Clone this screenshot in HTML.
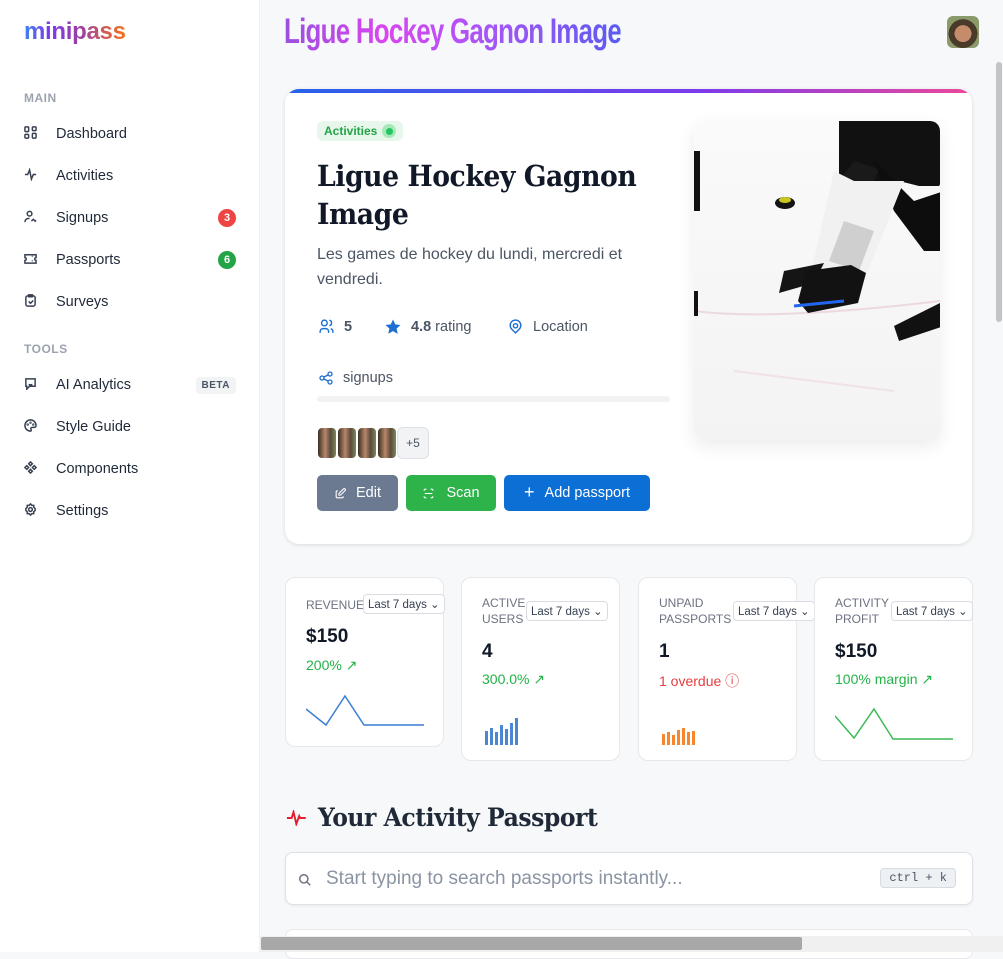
<!DOCTYPE html>
<html><head><meta charset="utf-8"><style>
*{box-sizing:border-box;margin:0;padding:0}
body{width:1003px;height:952px;overflow:hidden;background:#f6f8fa;font-family:"Liberation Sans",sans-serif;color:#1f2937;position:relative}
.sb{position:absolute;left:0;top:0;width:260px;height:952px;background:#fff;border-right:1px solid #eef0f3}
.logo{position:absolute;left:24px;top:18px;font-size:24px;font-weight:bold;letter-spacing:-0.3px;background:linear-gradient(90deg,#3b82f6 0%,#7c3aed 25%,#9b3fa5 55%,#f97316 100%);-webkit-background-clip:text;color:transparent}
.sec{position:absolute;left:24px;font-size:12px;font-weight:bold;color:#9ca3af;letter-spacing:.5px}
.it{position:absolute;left:24px;width:212px;height:24px;display:flex;align-items:center;font-size:14.5px;color:#1f2937}
.it svg{width:13px;height:13px;margin-right:19px;margin-top:-4px;stroke:#374151;fill:none;stroke-width:1.6}
.bd{margin-left:auto;width:18px;height:18px;border-radius:9px;color:#fff;font-size:11px;font-weight:bold;display:flex;align-items:center;justify-content:center}
.beta{margin-left:auto;background:#f1f3f5;color:#4b5563;font-size:10px;font-weight:bold;padding:3px 6px;border-radius:4px;letter-spacing:.5px}
.title{position:absolute;left:284px;top:12px;font-size:35px;font-weight:bold;letter-spacing:-1px;transform:scaleX(.74);transform-origin:left top;background:linear-gradient(90deg,#9b4fe0,#d946ef 30%,#a855f7 60%,#5b5bf0);-webkit-background-clip:text;color:transparent;white-space:nowrap}
.av{position:absolute;left:947px;top:16px;width:32px;height:32px;border-radius:6px;background:radial-gradient(circle at 50% 55%,#c58b6a 0 35%,#4a3a2a 36% 60%,#8a9a6a 61%)}
.hero{position:absolute;left:285px;top:89px;width:687px;height:455px;background:#fff;border-radius:14px;box-shadow:0 1px 4px rgba(0,0,0,.12);overflow:hidden}
.hero:before{content:"";position:absolute;left:0;top:0;right:0;height:4px;background:linear-gradient(90deg,#2563eb,#7c3aed 60%,#ec4899)}
.chip{position:absolute;left:32px;top:32px;height:20px;background:#e8f7ec;border-radius:6px;color:#22a447;font-size:12px;font-weight:bold;padding:3px 7px;display:flex;align-items:center}
.chip i{display:inline-block;width:14px;height:14px;border-radius:7px;background:#a7e8b8;margin-left:5px;position:relative}
.chip i:after{content:"";position:absolute;left:3.5px;top:3.5px;width:7px;height:7px;border-radius:4px;background:#22c55e}
.h1{position:absolute;left:32px;top:68px;font-family:"DejaVu Serif","Liberation Serif",serif;font-size:29px;font-weight:bold;line-height:38px;color:#111827;letter-spacing:-.5px;transform:scaleX(.92);transform-origin:left top;white-space:nowrap}
.desc{position:absolute;left:32px;top:153px;font-size:16px;line-height:25px;color:#4b5563;width:340px}
.meta{position:absolute;top:229px;font-size:14.5px;color:#4b5563;display:flex;align-items:center}
.meta svg{margin-right:9px}
.bar{position:absolute;left:32px;top:307px;width:353px;height:6px;background:#f1f2f4;border-radius:3px}
.avs{position:absolute;left:32px;top:338px;display:flex}
.avs span{width:20px;height:32px;border-radius:5px;background:linear-gradient(90deg,#3a3024,#b8866a 40%,#5a4a3a 70%,#7a8a5a);border:1px solid #fff}
.avs b{width:32px;height:32px;border-radius:6px;background:#f1f3f5;border:1px solid #dde1e6;font-size:12px;font-weight:normal;color:#4b5563;display:flex;align-items:center;justify-content:center}
.btn{position:absolute;top:386px;height:36px;border-radius:5px;color:#fff;font-size:14.5px;display:flex;align-items:center;justify-content:center}
.img{position:absolute;left:409px;top:32px;width:246px;height:319px;border-radius:10px;overflow:hidden;box-shadow:0 6px 18px rgba(0,0,0,.08);background:linear-gradient(#fafafa,#f3f3f4)}
.st{position:absolute;top:577px;background:#fff;border-radius:10px;border:1px solid #e5e7eb;width:159px}
.lb{position:absolute;left:20px;font-size:12px;color:#6b7280;line-height:16px}
.dd{position:absolute;font-size:11.5px;color:#374151;border:1px solid #d9dde3;border-radius:4px;padding:2px 4px;background:#fff;white-space:nowrap}
.val{position:absolute;left:20px;font-size:19px;font-weight:bold;color:#111827}
.ch{position:absolute;left:20px;font-size:14px;color:#22b347}
.sec2{position:absolute;left:286px;top:803px;font-family:"DejaVu Serif","Liberation Serif",serif;font-size:25px;font-weight:bold;color:#1f2937;display:flex;align-items:center;letter-spacing:-.5px;transform:scaleX(.94);transform-origin:left top;white-space:nowrap}
.search{position:absolute;left:285px;top:852px;width:688px;height:53px;background:#fff;border:1px solid #dde1e6;border-radius:8px;box-shadow:0 1px 3px rgba(0,0,0,.06)}
.kbd{position:absolute;right:16px;top:15px;font-family:"Liberation Mono",monospace;font-size:12px;color:#4b5563;background:#eef1f4;border:1px solid #d6dbe1;border-radius:4px;padding:2px 8px}
</style></head><body>
<div class="sb">
<div class="logo">minipass</div>
<div class="sec" style="top:91px">MAIN</div>
<div class="it" style="top:122px"><svg viewBox="0 0 14 14"><rect x="1" y="1" width="4" height="5" rx="1"/><rect x="9" y="1" width="4" height="4" rx="1"/><rect x="1" y="9" width="4" height="4" rx="1"/><rect x="9" y="8" width="4" height="5" rx="1"/></svg>Dashboard</div>
<div class="it" style="top:164px"><svg viewBox="0 0 14 14"><path d="M1 7h3l2-5 2 10 2-5h3"/></svg>Activities</div>
<div class="it" style="top:206px"><svg viewBox="0 0 14 14"><circle cx="6" cy="4" r="2.5"/><path d="M1 13c0-3 2-4 5-4M8 12l2-2 2 2 1-1"/></svg>Signups<span class="bd" style="background:#ef4444">3</span></div>
<div class="it" style="top:248px"><svg viewBox="0 0 14 14"><path d="M1 3h12v3a1.5 1.5 0 0 0 0 3v3H1V9a1.5 1.5 0 0 0 0-3zM9 4v1M9 9v1"/></svg>Passports<span class="bd" style="background:#22a447">6</span></div>
<div class="it" style="top:290px"><svg viewBox="0 0 14 14"><rect x="2" y="2" width="10" height="11" rx="2"/><path d="M5 1h4v2H5zM5 8l2 2 3-3"/></svg>Surveys</div>
<div class="sec" style="top:342px">TOOLS</div>
<div class="it" style="top:373px"><svg viewBox="0 0 14 14"><path d="M2 2h10v8H6l-3 3v-3H2z"/><path d="M5 6h.1M9 6h.1M5 8q2 1 4 0"/></svg>AI Analytics<span class="beta">BETA</span></div>
<div class="it" style="top:415px"><svg viewBox="0 0 14 14"><path d="M7 1a6 6 0 1 0 0 12c1 0 1-1 .5-2s0-2 1.5-2h2a2 2 0 0 0 2-2 6 6 0 0 0-6-6z"/><circle cx="4" cy="6" r=".5"/><circle cx="7" cy="4" r=".5"/><circle cx="10" cy="6" r=".5"/></svg>Style Guide</div>
<div class="it" style="top:457px"><svg viewBox="0 0 14 14"><path d="M7 1l2 2-2 2-2-2zM11 5l2 2-2 2-2-2zM3 5l2 2-2 2-2-2zM7 9l2 2-2 2-2-2z"/></svg>Components</div>
<div class="it" style="top:499px"><svg viewBox="0 0 14 14"><circle cx="7" cy="7" r="2"/><path d="M7 1l1.5 1.5h2v2L12 6v2l-1.5 1.5v2h-2L7 13l-1.5-1.5h-2v-2L2 8V6l1.5-1.5v-2h2z"/></svg>Settings</div>
</div>

<div class="title">Ligue Hockey Gagnon Image</div>
<div class="av"></div>

<div class="hero">
<div class="chip">Activities<i></i></div>
<div class="h1">Ligue Hockey Gagnon<br>Image</div>
<div class="desc">Les games de hockey du lundi, mercredi et vendredi.</div>
<div class="meta" style="left:33px"><svg width="17" height="17" viewBox="0 0 24 24" fill="none" stroke="#1d6fd1" stroke-width="2"><circle cx="9" cy="7" r="4"/><path d="M3 21v-2a4 4 0 0 1 4-4h4a4 4 0 0 1 4 4v2M16 3.1a4 4 0 0 1 0 7.8M21 21v-2a4 4 0 0 0-3-3.9"/></svg><b style="color:#4b5563">5</b></div>
<div class="meta" style="left:99px"><svg width="18" height="18" viewBox="0 0 24 24" fill="#1d6fd1"><path d="M12 2l3 6.5 7 .8-5.2 4.8 1.5 7L12 17.5 5.7 21l1.5-7L2 9.3l7-.8z"/></svg><b style="color:#4b5563;margin-right:4px">4.8</b>rating</div>
<div class="meta" style="left:222px"><svg width="17" height="17" viewBox="0 0 24 24" fill="none" stroke="#1d6fd1" stroke-width="2"><circle cx="12" cy="11" r="3"/><path d="M12 21l-5-5a7.5 7.5 0 1 1 10 0z"/></svg>Location</div>
<div class="meta" style="left:33px;top:281px"><svg width="16" height="16" viewBox="0 0 24 24" fill="none" stroke="#1d6fd1" stroke-width="2"><circle cx="6" cy="12" r="3"/><circle cx="18" cy="6" r="3"/><circle cx="18" cy="18" r="3"/><path d="M8.7 10.7l6.6-3.4M8.7 13.3l6.6 3.4"/></svg>signups</div>
<div class="bar"></div>
<div class="avs"><span></span><span></span><span></span><span></span><b>+5</b></div>
<div class="btn" style="left:32px;width:81px;background:#6b7a90"><svg width="13" height="13" viewBox="0 0 24 24" fill="none" stroke="#fff" stroke-width="2" style="margin-right:9px"><path d="M7 7H6a2 2 0 0 0-2 2v9a2 2 0 0 0 2 2h9a2 2 0 0 0 2-2v-1"/><path d="M20.4 6.6a2.1 2.1 0 0 0-3-3L9 12v3h3z"/></svg>Edit</div>
<div class="btn" style="left:121px;width:90px;background:#2eb24a"><svg width="13" height="13" viewBox="0 0 24 24" fill="none" stroke="#fff" stroke-width="2" style="margin-right:11px"><path d="M4 7V6a2 2 0 0 1 2-2h2M4 17v1a2 2 0 0 0 2 2h2M16 4h2a2 2 0 0 1 2 2v1M16 20h2a2 2 0 0 0 2-2v-1M5 12h14"/></svg>Scan</div>
<div class="btn" style="left:219px;width:146px;background:#0b6fd6"><span style="font-size:18px;margin-right:10px;margin-top:-2px">+</span>Add passport</div>
<div class="img"><svg width="246" height="319" viewBox="0 0 246 319">
<path d="M0 190 Q80 200 246 180" stroke="#e8c6cc" stroke-width="2" fill="none" opacity=".6"/>
<path d="M40 250 Q120 260 200 270" stroke="#ecd0d4" stroke-width="2" fill="none" opacity=".5"/>
<path d="M145 0h115v40l-15 25-20 0 -20-5-60 0z" fill="#111"/>
<path d="M145 60l15-20 25 8-20 50-15 40-20-5z" fill="#1a1a1a"/>
<path d="M180 40l40 40 30-10v60l-20 0-30-40z" fill="#0d0d0d"/>
<path d="M140 50l20 10 50 0-40 100-40 20-15-20z" fill="#f1f1f1"/>
<path d="M150 100l30 10-15 40-30-10z" fill="#cfcfcf"/>
<path d="M90 150l40-8 -10 20-35 10z" fill="#151515"/>
<path d="M112 150l45-6 15 8 -8 30-50 10-10-12z" fill="#121212"/>
<path d="M100 185l50-5" stroke="#2266ee" stroke-width="3"/>
<ellipse cx="91" cy="82" rx="10" ry="6" fill="#141414"/><ellipse cx="91" cy="79" rx="6" ry="3" fill="#c8c820"/>
<path d="M200 205l50-25v25l-45 15z" fill="#111"/>
<path d="M0 30h6v60H0zM0 170h4v25H0z" fill="#111"/>
</svg></div>
</div>

<div class="st" style="left:285px;height:170px"><div class="lb" style="top:19px">REVENUE</div><div class="dd" style="left:77px;top:16px">Last 7 days ⌄</div><div class="val" style="top:48px">$150</div><div class="ch" style="top:79px">200% ↗</div>
<svg style="position:absolute;left:20px;top:115px" width="120" height="40"><polyline points="0,16 20,32 39,3 58,32 118,32" fill="none" stroke="#3b7fd4" stroke-width="1.5"/></svg></div>
<div class="st" style="left:461px;height:184px"><div class="lb" style="top:17px">ACTIVE<br>USERS</div><div class="dd" style="left:64px;top:23px">Last 7 days ⌄</div><div class="val" style="top:63px">4</div><div class="ch" style="top:93px">300.0% ↗</div>
<svg style="position:absolute;left:23px;top:140px" width="40" height="28" fill="#4a86d4"><rect x="0" y="13" width="3" height="14"/><rect x="5" y="10" width="3" height="17"/><rect x="10" y="14" width="3" height="13"/><rect x="15" y="7" width="3" height="20"/><rect x="20" y="11" width="3" height="16"/><rect x="25" y="5" width="3" height="22"/><rect x="30" y="0" width="3" height="27"/></svg></div>
<div class="st" style="left:638px;height:184px"><div class="lb" style="top:17px">UNPAID<br>PASSPORTS</div><div class="dd" style="left:94px;top:23px">Last 7 days ⌄</div><div class="val" style="top:63px">1</div><div class="ch" style="top:93px;color:#e53e3e">1 overdue ⓘ</div>
<svg style="position:absolute;left:23px;top:149px" width="40" height="18" fill="#f5862e"><rect x="0" y="7" width="3" height="11"/><rect x="5" y="5" width="3" height="13"/><rect x="10" y="8" width="3" height="10"/><rect x="15" y="3" width="3" height="15"/><rect x="20" y="1" width="3" height="17"/><rect x="25" y="5" width="3" height="13"/><rect x="30" y="4" width="3" height="14"/></svg></div>
<div class="st" style="left:814px;height:184px"><div class="lb" style="top:17px">ACTIVITY<br>PROFIT</div><div class="dd" style="left:76px;top:23px">Last 7 days ⌄</div><div class="val" style="top:63px">$150</div><div class="ch" style="top:93px">100% margin ↗</div>
<svg style="position:absolute;left:20px;top:128px" width="120" height="40"><polyline points="0,10 19,32 39,3 58,33 118,33" fill="none" stroke="#3dba55" stroke-width="1.5"/></svg></div>

<div class="sec2"><svg width="22" height="16" viewBox="0 0 22 16" style="margin-right:12px"><path d="M1 8h5l2-6 3 12 3-8 1 2h6" fill="none" stroke="#e11d2e" stroke-width="2"/></svg>Your Activity Passport</div>
<div class="search"><svg style="position:absolute;left:12px;top:20px" width="14" height="14" viewBox="0 0 24 24" fill="none" stroke="#6b7280" stroke-width="2.5"><circle cx="10" cy="10" r="7"/><path d="M15 15l6 6"/></svg><div style="position:absolute;left:40px;top:15px;font-size:19px;color:#8a94a3">Start typing to search passports instantly...</div><div class="kbd">ctrl + k</div></div>
<div style="position:absolute;left:285px;top:929px;width:688px;height:30px;background:#fff;border:1px solid #e5e7eb;border-radius:8px"></div>
<div style="position:absolute;left:260px;top:936px;width:743px;height:16px;background:#f0f0f0"></div>
<div style="position:absolute;left:261px;top:937px;width:541px;height:13px;background:#a8a8a8;border-radius:2px"></div>
<div style="position:absolute;left:996px;top:62px;width:6px;height:260px;background:#c4c4c4;border-radius:3px"></div>
</body></html>
